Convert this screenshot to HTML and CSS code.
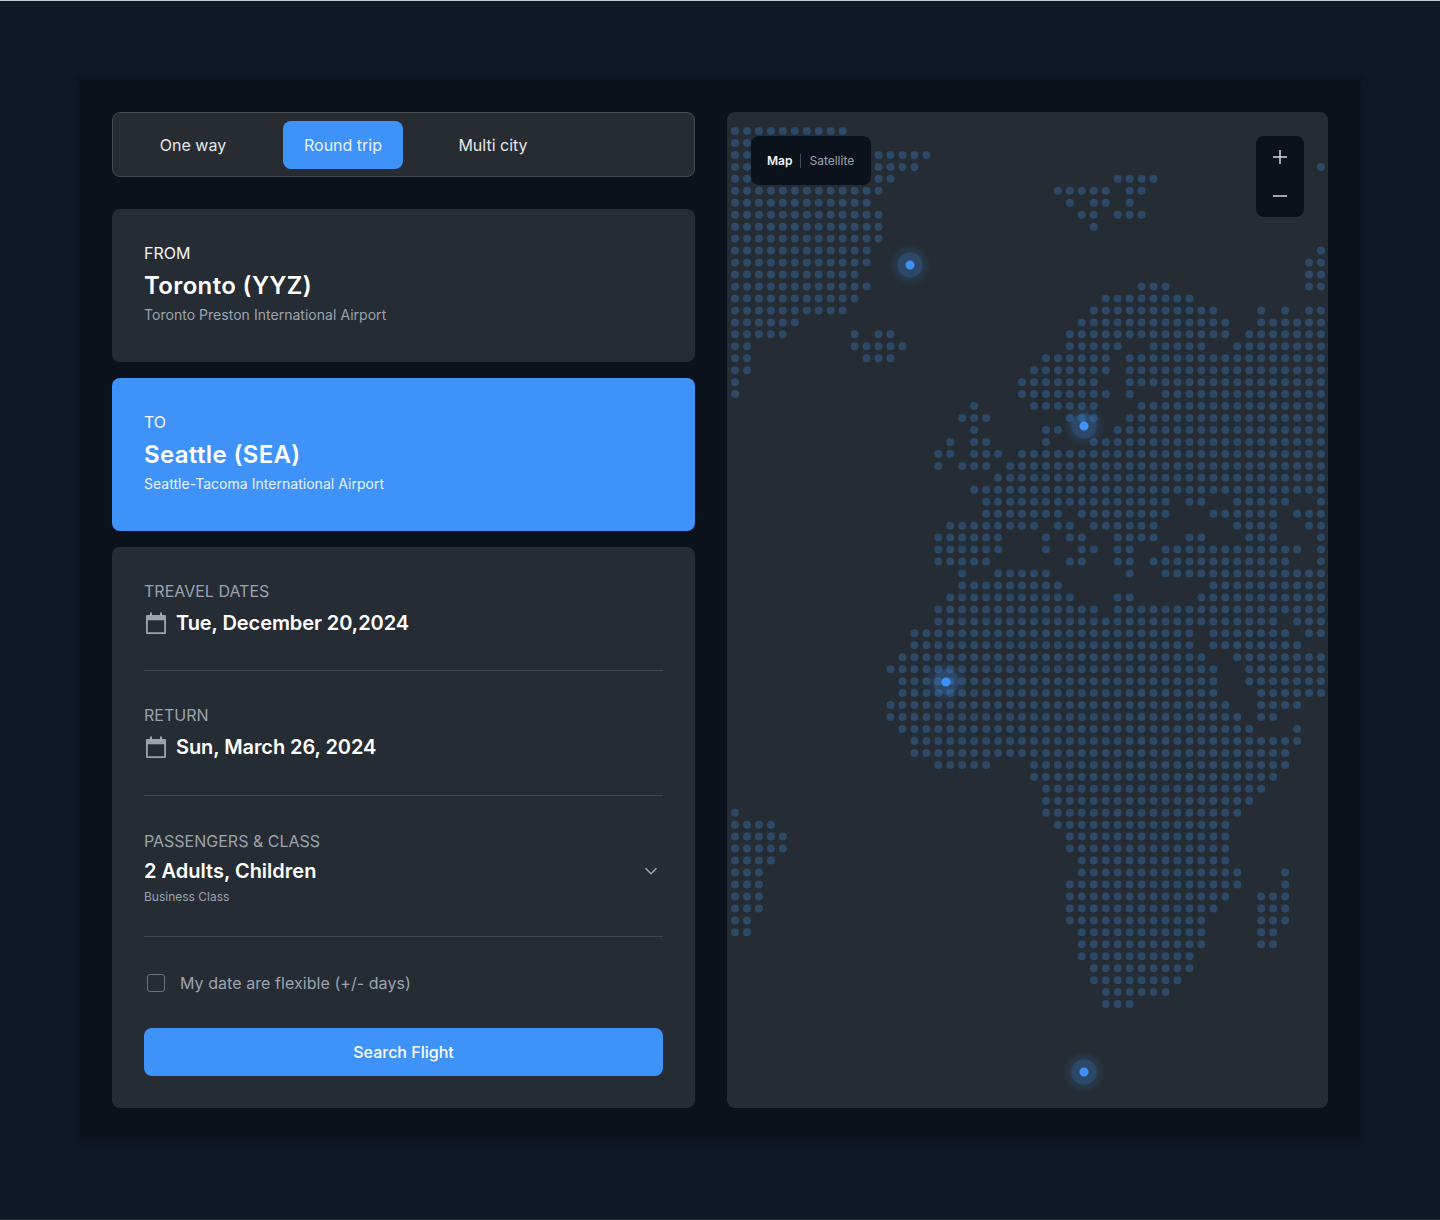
FILE: index.html
```html
<!DOCTYPE html>
<html lang="en">
<head>
<meta charset="utf-8">
<title>Flight search</title>
<link rel="stylesheet" href="styles.css">
</head>
<body>
<main class="panel">
  <section class="column">
    <nav class="tabs">
      <button class="tab">One way</button>
      <button class="tab tab-active">Round trip</button>
      <button class="tab">Multi city</button>
    </nav>
    <div class="stack">
      <article class="card place">
        <div class="label label-light">FROM</div>
        <h2 class="city">Toronto (YYZ)</h2>
        <p class="airport">Toronto Preston International Airport</p>
      </article>
      <article class="card place place-active">
        <div class="label label-light">TO</div>
        <h2 class="city">Seattle (SEA)</h2>
        <p class="airport">Seattle-Tacoma International Airport</p>
      </article>
      <article class="card details">
        <div class="field field-first">
          <div class="label">TREAVEL DATES</div>
          <div class="date-row">
            <svg class="calendar" viewBox="0 0 22 22" aria-hidden="true"><path class="cal-fill" d="M5 0.5h2v2.500h8V0.5h2V3h3a1 1 0 0 1 1 1v17a1 1 0 0 1-1 1H2a1 1 0 0 1-1-1V4a1 1 0 0 1 1-1h3zM2.800 8.200V20.200H19.200V8.200z"/></svg>
            <span class="value">Tue, December 20,2024</span>
          </div>
        </div>
        <div class="field field-return">
          <div class="label">RETURN</div>
          <div class="date-row">
            <svg class="calendar" viewBox="0 0 22 22" aria-hidden="true"><path class="cal-fill" d="M5 0.5h2v2.500h8V0.5h2V3h3a1 1 0 0 1 1 1v17a1 1 0 0 1-1 1H2a1 1 0 0 1-1-1V4a1 1 0 0 1 1-1h3zM2.800 8.200V20.200H19.200V8.200z"/></svg>
            <span class="value">Sun, March 26, 2024</span>
          </div>
        </div>
        <div class="field field-pass">
          <div class="label">PASSENGERS &amp; CLASS</div>
          <div class="select-row">
            <span class="value">2 Adults, Children</span>
            <svg class="chevron" viewBox="0 0 14 8" aria-hidden="true"><path d="M1.500 1.200 7 6.700l5.500-5.500"/></svg>
          </div>
          <div class="small">Business Class</div>
        </div>
        <label class="flex-row">
          <span class="checkbox"></span>
          <span class="flex-text">My date are flexible (+/- days)</span>
        </label>
        <button class="search">Search Flight</button>
      </article>
    </div>
  </section>
  <section class="map" id="map">
    <svg class="dots" id="dots" width="601" height="995" viewBox="0 0 601 995" aria-hidden="true"></svg>
    <div class="pin pin-a"></div>
    <div class="pin pin-b"></div>
    <div class="pin pin-c"></div>
    <div class="pin pin-d"></div>
    <div class="map-type">
      <span class="type-on">Map</span>
      <span class="type-sep"></span>
      <span class="type-off">Satellite</span>
    </div>
    <div class="zoom">
      <svg class="zoom-icon" viewBox="0 0 16 16" aria-hidden="true"><path d="M8 1v14M1 8h14"/></svg>
      <svg class="zoom-icon" viewBox="0 0 16 16" aria-hidden="true"><path d="M1 8h14"/></svg>
    </div>
  </section>
</main>
<script src="map.js"></script>
</body>
</html>
```
FILE: styles.css
```css
* { box-sizing: border-box; }
html, body { margin: 0; padding: 0; }
body {
  min-height: 1220px;
  background: #0f1827;
  border-top: 1px solid #c3c8d0;
  border-bottom: 1px solid #2b3340;
  padding: 79px 80px;
  font-family: Inter, "Liberation Sans", sans-serif;
  color: #fff;
}
.panel {
  display: flex;
  gap: 32px;
  padding: 32px;
  height: 1060px;
  background: #0c121c;
  box-shadow: 0 0 5px 1px #0c121c;
}
.column { width: 583px; display: flex; flex-direction: column; gap: 32px; }
.tabs {
  display: flex;
  gap: 30px;
  height: 65px;
  padding: 8px 20px;
  background: #262c32;
  border: 1px solid #434a52;
  border-radius: 8px;
}
.tab {
  width: 120px;
  height: 48px;
  border: 0;
  border-radius: 8px;
  background: transparent;
  color: #e5e7eb;
  font: 400 16px/24px Inter, sans-serif;
}
.tab-active { background: #3e92f8; color: #e9f2fe; }
.stack { flex: 1; display: flex; flex-direction: column; gap: 16px; }
.card { background: #252c33; border-radius: 8px; }
.place { height: 153px; padding: 32px; }
.place-active { background: #3e92f8; }
.label { font-size: 16px; line-height: 24px; color: #9ca3af; }
.label-light { color: #f3f4f6; }
.city { margin: 5px 0 0; font-size: 24px; line-height: 32px; font-weight: 600; letter-spacing: 0.35px; color: #fff; }
.airport { margin: 3px 0 0; font-size: 14px; line-height: 20px; letter-spacing: 0.03px; color: #9ca3af; }
.place-active .airport { color: #e9f2fe; }
.details { flex: 1; padding: 32px; }
.field { border-bottom: 1px solid #40474f; }
.field-first { height: 92px; }
.field-return { height: 125px; padding-top: 32px; }
.field-pass { height: 141px; padding-top: 33px; }
.date-row { display: flex; align-items: center; gap: 9px; margin-top: 4px; height: 32px; }
.calendar { width: 22px; height: 22px; margin-left: 1px; flex: none; }
.cal-fill { fill: #9ca3af; fill-rule: evenodd; }
.value { font-size: 20px; line-height: 28px; font-weight: 600; color: #fff; }
.date-row .value { letter-spacing: -0.07px; }
.select-row { display: flex; justify-content: space-between; align-items: center; height: 28px; margin-top: 4px; }
.chevron { width: 14px; height: 8px; margin-right: 5px; fill: none; stroke: #9ca3af; stroke-width: 1.600; }
.small { margin-top: 2px; font-size: 12px; line-height: 20px; color: #9ca3af; }
.flex-row { display: flex; align-items: center; gap: 15px; height: 24px; margin-top: 34px; padding-left: 3px; }
.checkbox { width: 18px; height: 18px; border: 1.500px solid #6b7280; border-radius: 3px; }
.flex-text { font-size: 16px; line-height: 24px; letter-spacing: 0.06px; color: #9ca3af; }
.search {
  display: block;
  width: 100%;
  height: 48px;
  margin-top: 33px;
  border: 0;
  border-radius: 8px;
  background: #3e92f8;
  color: #fff;
  font: 500 16px/24px Inter, sans-serif;
}
.map { position: relative; flex: 1; background: #252c33; border-radius: 8px; overflow: hidden; }
.dots { display: block; }
.dots circle { fill: #2c4967; }
.pin {
  position: absolute;
  width: 44px;
  height: 44px;
  margin: -22px 0 0 -22px;
  border-radius: 50%;
  background: radial-gradient(circle closest-side, #3e92f8 0 4px, rgba(62, 146, 248, 0.28) 5px 11.500px, rgba(62, 146, 248, 0.11) 13.500px, rgba(62, 146, 248, 0.04) 19px, transparent 22px);
}
.pin-a { left: 183px; top: 153px; }
.pin-b { left: 357px; top: 314px; }
.pin-c { left: 219px; top: 570px; }
.pin-d { left: 357px; top: 960px; }
.map-type {
  position: absolute;
  left: 24px;
  top: 24px;
  width: 120px;
  height: 49px;
  display: flex;
  align-items: center;
  padding-left: 16px;
  gap: 8px;
  background: #0c121c;
  border-radius: 8px;
  font-size: 12px;
  line-height: 16px;
}
.type-on { font-weight: 600; color: #f3f4f6; }
.type-sep { width: 1px; height: 14px; background: #434a52; }
.type-off { color: #9ca3af; }
.zoom {
  position: absolute;
  right: 24px;
  top: 24px;
  width: 48px;
  height: 81px;
  display: flex;
  flex-direction: column;
  align-items: center;
  justify-content: space-between;
  padding: 13px 0 13px;
  background: #0c121c;
  border-radius: 8px;
}
.zoom-icon { width: 16px; height: 16px; fill: none; stroke: #d1d5db; stroke-width: 1.500; }
```
FILE: map.js
```js
// Dotted world map: each row lists [first, last] column ranges of land dots.
var rows = [
  [[0,9]],
  [[0,11]],
  [[0,1],[12,16]],
  [[0,1],[12,15],[49,49]],
  [[0,1],[12,13],[32,35]],
  [[0,12],[27,31],[33,34]],
  [[0,11],[28,28],[30,31],[33,33]],
  [[0,12],[29,30],[32,34]],
  [[0,12],[30,30]],
  [[0,12]],
  [[0,11],[49,49]],
  [[0,11],[48,49]],
  [[0,10],[48,49]],
  [[0,11],[34,36],[48,49]],
  [[0,10],[31,38]],
  [[0,9],[30,40],[44,44],[46,46],[48,49]],
  [[0,5],[29,41],[44,49]],
  [[0,4],[10,10],[12,13],[28,41],[43,49]],
  [[0,1],[10,14],[28,32],[35,39],[42,49]],
  [[0,1],[11,13],[26,31],[33,49]],
  [[0,1],[25,31],[33,49]],
  [[0,0],[24,30],[33,49]],
  [[0,0],[24,31],[33,33],[36,49]],
  [[20,20],[25,30],[34,49]],
  [[19,21],[28,30],[33,49]],
  [[20,20],[26,27],[32,49]],
  [[18,18],[20,21],[26,26],[30,49]],
  [[17,18],[20,22],[24,49]],
  [[17,17],[19,21],[23,49]],
  [[22,49]],
  [[20,49]],
  [[21,36],[38,39],[42,46],[49,49]],
  [[21,27],[29,36],[40,45],[47,49]],
  [[18,25],[27,28],[30,35],[42,45],[48,49]],
  [[17,22],[26,26],[28,29],[32,35],[38,39],[43,45],[49,49]],
  [[17,22],[26,26],[29,30],[32,33],[36,47],[49,49]],
  [[17,21],[28,29],[32,33],[35,46],[49,49]],
  [[19,19],[22,26],[33,33],[36,49]],
  [[19,27],[40,49]],
  [[18,28],[32,33],[39,49]],
  [[17,30],[32,49]],
  [[17,45],[47,49]],
  [[15,38],[40,46],[48,49]],
  [[15,38],[40,47]],
  [[14,39],[42,49]],
  [[13,40],[43,49]],
  [[14,40],[43,49]],
  [[14,40],[44,49]],
  [[13,41],[44,47]],
  [[13,42],[44,45]],
  [[14,43],[47,47]],
  [[15,47]],
  [[15,46]],
  [[17,21],[25,46]],
  [[25,45]],
  [[26,44]],
  [[26,43]],
  [[0,0],[26,42]],
  [[0,3],[27,41]],
  [[0,4],[28,41]],
  [[0,4],[28,41]],
  [[0,3],[29,41]],
  [[0,2],[29,42],[46,46]],
  [[0,2],[28,42],[46,46]],
  [[0,2],[28,41],[44,46]],
  [[0,2],[28,40],[44,46]],
  [[0,1],[28,39],[44,46]],
  [[0,1],[29,39],[44,45]],
  [[29,39],[44,45]],
  [[29,38]],
  [[30,38]],
  [[30,37]],
  [[31,36]],
  [[31,33]]
];
var svg = document.getElementById("dots");
var NS = "http://www.w3.org/2000/svg";
rows.forEach(function (ranges, j) {
  ranges.forEach(function (r) {
    for (var i = r[0]; i <= r[1]; i++) {
      var c = document.createElementNS(NS, "circle");
      c.setAttribute("cx", (8 + 11.96 * i).toFixed(1));
      c.setAttribute("cy", (19 + 11.96 * j).toFixed(1));
      c.setAttribute("r", "4");
      svg.appendChild(c);
    }
  });
});
```
